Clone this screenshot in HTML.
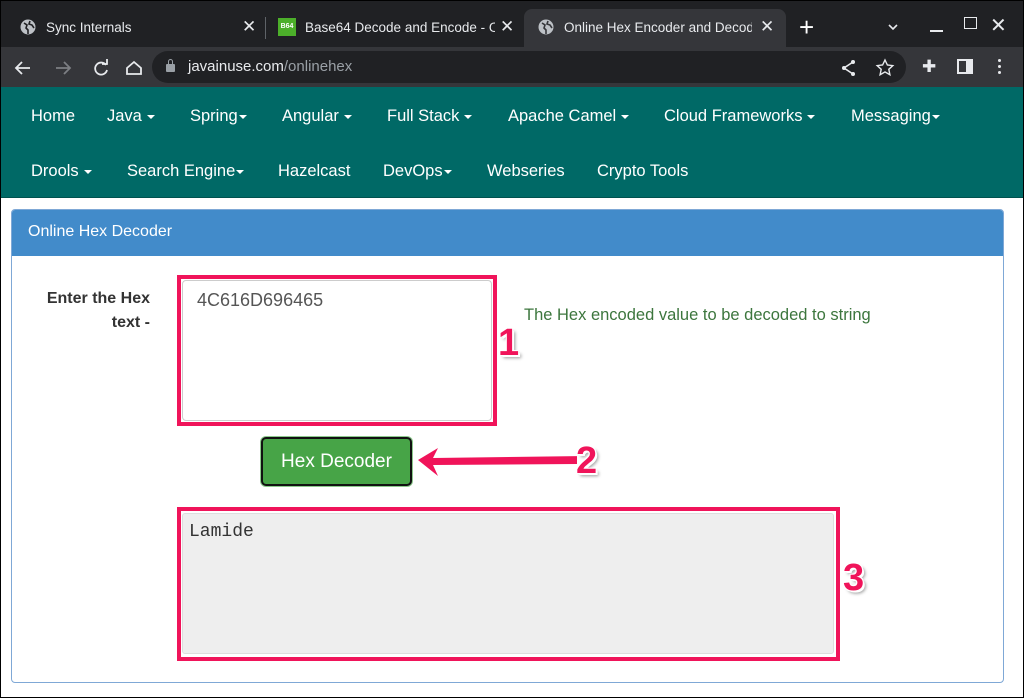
<!DOCTYPE html>
<html><head><meta charset="utf-8"><style>
*{margin:0;padding:0;box-sizing:border-box}
body{width:1024px;height:698px;overflow:hidden;background:#fff;font-family:"Liberation Sans",sans-serif;position:relative}
.a{position:absolute}
.tab{color:#e8eaed;font-size:13.5px}
.nav{color:#fff;font-size:16.5px;position:absolute}
.car{display:inline-block;width:0;height:0;border-left:4px solid transparent;border-right:4px solid transparent;border-top:4px solid #fff;vertical-align:middle;margin-left:5px}
.num{position:absolute;color:#f0145a;font-weight:bold;font-size:38px;text-shadow:2px 2px 0 #fff,-1px -1px 0 #fff,1px -1px 0 #fff,-1px 1px 0 #fff,3px 3px 3px rgba(0,0,0,.4)}
</style></head><body>
<div class="a" style="left:0;top:0;width:1024px;height:47px;background:#202124"></div>
<div class="a" style="left:524px;top:9px;width:262px;height:40px;background:#35363a;border-radius:8px 8px 0 0"></div>
<svg class="a" style="left:20px;top:19px" width="16" height="16"><circle cx="8" cy="8" r="7.5" fill="#bdc1c6"/><path d="M4 4l3 2-1 3 2 2v4M10 2l-1 3 3 1 2 3" stroke="#202124" stroke-width="1.6" fill="none"/></svg>
<div class="a tab" style="left:46px;top:20px">Sync Internals</div>
<div class="a tab" style="left:242px;top:17px;font-size:17px">✕</div>
<div class="a" style="left:265px;top:17px;width:1px;height:22px;background:#5f6368"></div>
<div class="a" style="left:278px;top:18px;width:18px;height:18px;background:#4caf2a;color:#fff;font-size:7px;font-weight:bold;text-align:center;line-height:18px">B64</div>
<div class="a tab" style="left:305px;top:20px;width:190px;white-space:nowrap;overflow:hidden">Base64 Decode and Encode - Online</div>
<div class="a tab" style="left:500px;top:17px;font-size:17px">✕</div>
<svg class="a" style="left:538px;top:19px" width="16" height="16"><circle cx="8" cy="8" r="7.5" fill="#bdc1c6"/><path d="M4 4l3 2-1 3 2 2v4M10 2l-1 3 3 1 2 3" stroke="#35363a" stroke-width="1.6" fill="none"/></svg>
<div class="a tab" style="left:564px;top:20px;width:188px;white-space:nowrap;overflow:hidden">Online Hex Encoder and Decoder</div>
<div class="a tab" style="left:760px;top:17px;font-size:17px">✕</div>
<div class="a" style="left:799px;top:14px;color:#fff;font-size:26px;line-height:26px">+</div>
<svg class="a" style="left:886px;top:22px" width="14" height="10"><path d="M3 3l4 4 4-4" stroke="#e8eaed" stroke-width="1.6" fill="none"/></svg>
<div class="a" style="left:930px;top:30px;width:13px;height:1.5px;background:#e8eaed"></div>
<div class="a" style="left:964px;top:17px;width:13px;height:12px;border:1.5px solid #e8eaed"></div>
<div class="a" style="left:990px;top:13px;color:#e8eaed;font-size:20px">✕</div>

<div class="a" style="left:0;top:47px;width:1024px;height:40px;background:#35363a"></div>
<svg class="a" style="left:12px;top:57px" width="130" height="22"><g stroke-width="1.8" fill="none"><path d="M18 11H4M10 5l-6 6 6 6" stroke="#e8eaed"/><path d="M44 11h14M52 5l6 6-6 6" stroke="#7d7f83"/><path d="M94 8a6 6 0 1 0 1 5" stroke="#e8eaed"/><path d="M90 7h5V2" stroke="#e8eaed"/><path d="M115 11l7-6 7 6v6h-14z" stroke="#e8eaed"/></g></svg>
<div class="a" style="left:152px;top:51px;width:754px;height:32px;background:#202124;border-radius:16px"></div>
<div class="a" style="left:166px;top:64px;width:9px;height:8px;background:#9aa0a6;border-radius:1px"></div>
<div class="a" style="left:168px;top:59px;width:5px;height:7px;border:1.5px solid #9aa0a6;border-radius:3px 3px 0 0"></div>
<div class="a" style="left:188px;top:58px;font-size:15px;color:#e8eaed">javainuse.com<span style="color:#9aa0a6">/onlinehex</span></div>
<svg class="a" style="left:840px;top:58px" width="60" height="20"><path d="M13 4L4 10l9 6" stroke="#e8eaed" stroke-width="1.6" fill="none"/><circle cx="13" cy="4" r="2" fill="#e8eaed"/><circle cx="4" cy="10" r="2" fill="#e8eaed"/><circle cx="13" cy="16" r="2" fill="#e8eaed"/><path d="M45 2l2.4 5 5.4.6-4 3.7 1.1 5.4-4.9-2.8-4.9 2.8 1.1-5.4-4-3.7 5.4-.6z" stroke="#e8eaed" stroke-width="1.4" fill="none"/></svg>
<div class="a" style="left:922px;top:57px;color:#e8eaed;font-size:17px">✚</div>
<div class="a" style="left:957px;top:59px;width:16px;height:15px;border:2px solid #e8eaed;border-right:7px solid #e8eaed"></div>
<div class="a" style="left:998px;top:59px;width:3px;height:3px;background:#e8eaed;border-radius:50%;box-shadow:0 6px 0 #e8eaed,0 12px 0 #e8eaed"></div>

<div class="a" style="left:0;top:87px;width:1024px;height:111px;background:#006966;border-bottom:1px solid #00524f"></div>
<div class="nav" style="left:31px;top:107px">Home</div>
<div class="nav" style="left:107px;top:107px">Java<span class="car"></span></div>
<div class="nav" style="left:190px;top:107px">Spring<span class="car" style="margin-left:1px"></span></div>
<div class="nav" style="left:282px;top:107px">Angular<span class="car"></span></div>
<div class="nav" style="left:387px;top:107px">Full Stack<span class="car"></span></div>
<div class="nav" style="left:508px;top:107px">Apache Camel<span class="car"></span></div>
<div class="nav" style="left:664px;top:107px">Cloud Frameworks<span class="car"></span></div>
<div class="nav" style="left:851px;top:107px">Messaging<span class="car" style="margin-left:1px"></span></div>
<div class="nav" style="left:31px;top:162px">Drools<span class="car"></span></div>
<div class="nav" style="left:127px;top:162px">Search Engine<span class="car" style="margin-left:1px"></span></div>
<div class="nav" style="left:278px;top:162px">Hazelcast</div>
<div class="nav" style="left:383px;top:162px">DevOps<span class="car" style="margin-left:1px"></span></div>
<div class="nav" style="left:487px;top:162px">Webseries</div>
<div class="nav" style="left:597px;top:162px">Crypto Tools</div>

<div class="a" style="left:11px;top:209px;width:993px;height:474px;border:1px solid #7fa8d6;border-radius:4px;overflow:hidden">
<div style="height:46px;background:#428bca;color:#fff;font-size:16px;padding:13px 0 0 16px">Online Hex Decoder</div>
</div>
<div class="a" style="left:30px;top:287px;width:120px;text-align:right;font-weight:bold;font-size:16px;color:#333;line-height:24px">Enter the Hex text -</div>
<div class="a" style="left:177px;top:275px;width:320px;height:151px;border:4px solid #f0145a"></div>
<div class="a" style="left:182px;top:280px;width:310px;height:141px;border:1px solid #ccc;border-radius:4px;background:#fff"></div>
<div class="a" style="left:197px;top:290px;font-size:18px;color:#555">4C616D696465</div>
<div class="a" style="left:524px;top:306px;font-size:16.5px;color:#3c763d">The Hex encoded value to be decoded to string</div>
<div class="num" style="left:498px;top:322px">1</div>
<div class="a" style="left:261px;top:437px;width:151px;height:49px;border:2px solid #111;border-radius:5px;background:#47a447;box-shadow:0 0 0 1px #8cc98c;color:#fff;font-size:19px;text-align:center;line-height:45px">Hex Decoder</div>
<svg class="a" style="left:412px;top:443px" width="165" height="40"><path d="M6 17L26 5l-5 10 150 -2 0 8-150 1 5 11z" fill="#f0145a"/></svg>
<div class="num" style="left:576px;top:440px">2</div>
<div class="a" style="left:177px;top:507px;width:663px;height:154px;border:4px solid #f0145a"></div>
<div class="a" style="left:182px;top:513px;width:652px;height:141px;border:1px solid #ddd;border-radius:3px;background:#eee"></div>
<div class="a" style="left:189px;top:522px;font-family:'Liberation Mono',monospace;font-size:18px;color:#333">Lamide</div>
<div class="num" style="left:843px;top:557px">3</div>
<div class="a" style="left:0;top:0;width:1024px;height:698px;border:1.5px solid #000;pointer-events:none"></div>
</body></html>
